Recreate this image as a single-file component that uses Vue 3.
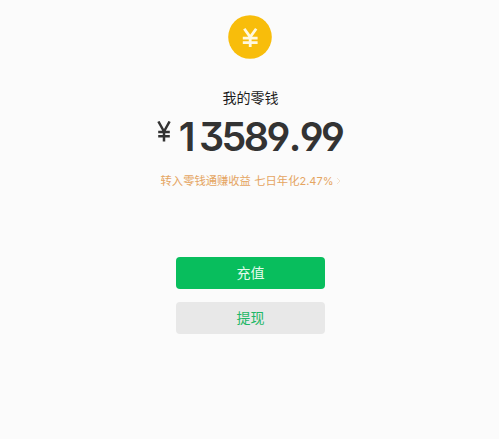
<script setup>
const balance = '13589.99'
// Narrow glyphs get wider tracking so that the figures keep an even rhythm.
const figures = balance.split('').map((char) => ({
  char,
  kind: char === '1' ? 'one' : char === '.' ? 'point' : 'figure',
}))
</script>

<template>
  <main class="wallet">
    <svg class="coin" viewBox="0 0 44 44" aria-hidden="true">
      <circle cx="22" cy="22" r="21.8" fill="#f8bd0b" />
      <path d="M16.3 13.7 22.2 22 28.2 13.7M22.2 21.5V32M14.8 23.1H29.6M14.8 27.7H29.6" fill="none" stroke="#fff8df" stroke-width="2.8" />
    </svg>
    <h1 class="title">我的零钱</h1>
    <div class="amount">
      <svg class="yen" viewBox="0 0 14 21" aria-label="¥">
        <path d="M1.4 .5 7 10.5 12.6 .5M7 10V20.5M1.2 11H12.8M1.2 15.3H12.8" fill="none" stroke="#333" stroke-width="2.5" />
      </svg>
      <span class="digits"><span v-for="(f, i) in figures" :key="i" :class="f.kind">{{ f.char }}</span></span>
    </div>
    <a class="promo">
      <span class="promo-text">转入零钱通赚收益 七日年化<span class="rate">2.47%</span></span>
      <svg class="chevron" viewBox="0 0 5 8" aria-hidden="true">
        <path d="M1 1 4 4 1 7" fill="none" stroke="#f3e0cb" stroke-width="1" />
      </svg>
    </a>
    <div class="actions">
      <button class="btn primary">充值</button>
      <button class="btn plain">提现</button>
    </div>
  </main>
</template>

<style>
body {
  background: #fbfbfb;
}
</style>

<style scoped>
.wallet {
  display: flex;
  flex-direction: column;
  align-items: center;
  box-sizing: border-box;
  height: 439px;
  padding: 15px 0 0 2px;
  font-family: "Noto Sans CJK SC", sans-serif;
}
.coin {
  width: 44px;
  height: 44px;
  margin-right: 2px;
}
.title {
  margin: 28px 0 0;
  font-size: 14px;
  line-height: 20px;
  font-weight: 400;
  color: #1c1c1c;
}
.amount {
  display: flex;
  align-items: flex-start;
  margin: 9px 2px 0 0;
  height: 40px;
  color: #333;
}
.yen {
  width: 14px;
  height: 21px;
  margin: 5px 8px 0 0;
}
.digits {
  font-family: Inter, sans-serif;
  font-size: 39.5px;
  line-height: 42px;
  font-weight: 600;
  letter-spacing: -2.6px;
  font-feature-settings: "cv09", "cv04";
}
.one {
  letter-spacing: 3.5px;
}
.point {
  margin-left: 1px;
  letter-spacing: -1.6px;
}
.promo {
  display: flex;
  align-items: center;
  gap: 3px;
  margin: 16px 0 0 1px;
  height: 17px;
  font-size: 11.3px;
  line-height: 17px;
  white-space: nowrap;
  color: #e5a562;
}
.promo-text {
  word-spacing: 0.8px;
}
.rate {
  font-family: Inter, sans-serif;
  font-size: 11px;
}
.chevron {
  width: 5px;
  height: 8px;
}
.actions {
  display: flex;
  flex-direction: column;
  gap: 13px;
  margin-top: 68px;
}
.btn {
  width: 149px;
  height: 32px;
  padding: 0 0 2px;
  border: 0;
  border-radius: 4px;
  font-family: inherit;
  font-size: 14px;
  line-height: 30px;
}
.primary {
  background: #08be5d;
  color: #e4fbec;
}
.plain {
  background: #e8e8e8;
  color: #1fb766;
}
</style>
